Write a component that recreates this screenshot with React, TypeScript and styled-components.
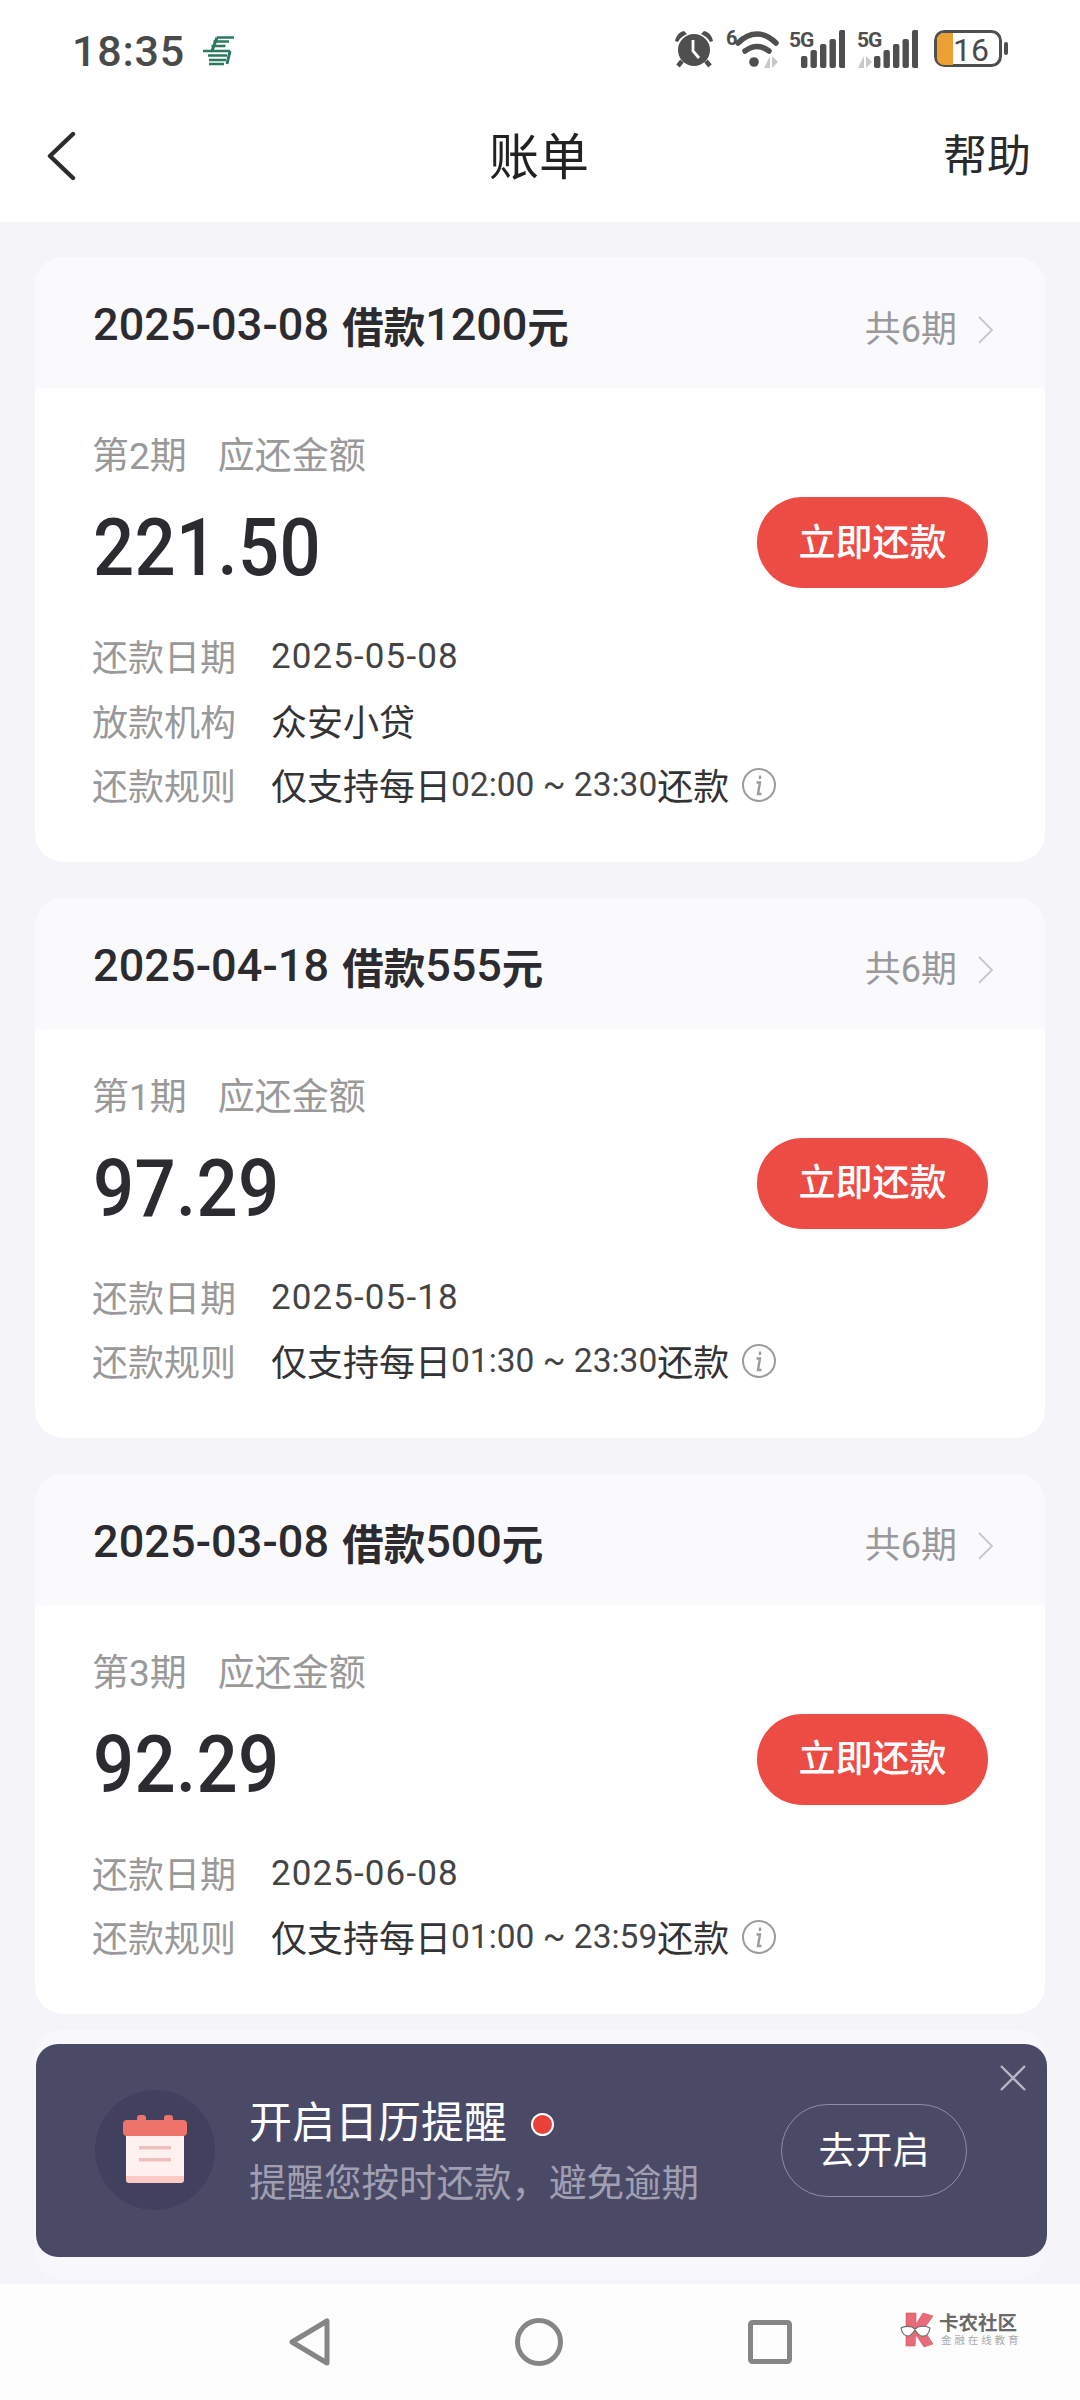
import React from "react";
import styled, { createGlobalStyle } from "styled-components";

const Global = createGlobalStyle`
  html, body { margin: 0; padding: 0; background: #fff; }
  body { font-family: Roboto, "Noto Sans CJK SC", sans-serif; }
  * { box-sizing: border-box; }
`;

const Page = styled.div`
  width: 1080px;
  height: 2400px;
  display: flex;
  flex-direction: column;
  overflow: hidden;
  background: #fff;
`;

const StatusBar = styled.div`
  height: 90px;
  flex: none;
  padding: 30px 72px 0;
  display: flex;
  justify-content: space-between;
  align-items: flex-start;
`;
const StatusLeft = styled.div`
  display: flex;
  align-items: center;
  gap: 18px;
`;
const Clock = styled.span`
  font: 500 43px/42px Roboto, sans-serif;
  color: #4a4a4a;
  letter-spacing: 0.8px;
`;
const StatusRight = styled.div`
  display: flex;
  align-items: flex-start;
`;
const StatusIcon = styled.svg<{ $ml?: number; $mt?: number }>`
  display: block;
  flex: none;
  margin-left: ${(p) => p.$ml ?? 0}px;
  margin-top: ${(p) => p.$mt ?? 0}px;
`;

const Header = styled.header`
  height: 132px;
  flex: none;
  padding: 0 48px 0 46px;
  display: grid;
  grid-template-columns: 1fr auto 1fr;
  align-items: center;
`;
const BackIcon = styled.svg`
  display: block;
`;
const Title = styled.h1`
  margin: -7px 0 0;
  font: 400 50px/60px "Noto Sans CJK SC", sans-serif;
  color: #222;
`;
const HelpLink = styled.span`
  justify-self: end;
  font: 400 44px/60px "Noto Sans CJK SC", sans-serif;
  color: #2a2a2a;
  margin: -6px 1px 0 0;
`;

const Main = styled.main`
  height: 2062px;
  flex: none;
  overflow: hidden;
  background: #f4f4f9;
  padding: 35px 35px 0;
  display: flex;
  flex-direction: column;
  gap: 36px;
`;

const Card = styled.section`
  background: #fff;
  border-radius: 28px;
  overflow: hidden;
`;
const CardHead = styled.div`
  height: 131px;
  background: #fafafd;
  padding: 0 51px 0 58px;
  display: flex;
  justify-content: space-between;
  align-items: center;
`;
const CardTitle = styled.div`
  display: flex;
  align-items: center;
  color: #2c2c30;
  margin-top: 5px;
`;
const TitleDate = styled.span`
  font: 500 45px/60px Roboto, sans-serif;
  margin-right: 13px;
  letter-spacing: 0.1px;
`;
const TitleWord = styled.span`
  font: 700 41.5px/60px "Noto Sans CJK SC", sans-serif;
`;
const TitleNum = styled.span`
  font: 500 45px/60px Roboto, sans-serif;
  letter-spacing: -0.1px;
`;
const Terms = styled.div`
  display: flex;
  align-items: center;
  gap: 21px;
  color: #999;
  font: 400 36px/50px Roboto, "Noto Sans CJK SC", sans-serif;
  margin-top: 14px;
`;
const Chevron = styled.svg`
  display: block;
`;

const CardBody = styled.div`
  padding: 45px 57px 44px 57px;
`;
const PeriodLine = styled.div`
  font: 400 37px/46px Roboto, "Noto Sans CJK SC", sans-serif;
  color: #999;
  display: flex;
  gap: 31px;
  margin-top: 1px;
  margin-bottom: -1px;
`;
const AmountRow = styled.div`
  height: 100px;
  margin-top: 19px;
  display: flex;
  justify-content: space-between;
  align-items: flex-start;
`;
const Amount = styled.div`
  font: 500 80px/100px Roboto, sans-serif;
  color: #2c2c30;
  letter-spacing: 0.4px;
  margin-left: 1px;
  transform: scaleX(0.905);
  transform-origin: left center;
`;
const PayButton = styled.button`
  width: 231px;
  height: 91px;
  margin-top: -1px;
  border: 0;
  border-radius: 46px;
  background: #ec4c44;
  color: #fff;
  font: 500 37px/50px "Noto Sans CJK SC", sans-serif;
  padding: 0 0 6px;
`;
const Rows = styled.div`
  margin-top: 25px;
  margin-bottom: 1px;
`;
const Row = styled.div`
  height: 64.5px;
  display: flex;
  align-items: center;
`;
const RowLabel = styled.span`
  width: 179px;
  flex: none;
  font: 400 36px/46px "Noto Sans CJK SC", sans-serif;
  color: #999;
`;
const RowValue = styled.span`
  font: 400 36px/46px "Noto Sans CJK SC", sans-serif;
  color: #333;
`;
const RowDigits = styled.span`
  font: 400 35px/46px Roboto, sans-serif;
  color: #444;
  letter-spacing: 1.1px;
  margin-top: 4px;
`;
const RuleTime = styled.span`
  font: 400 33.5px/46px Roboto, sans-serif;
  color: #444;
  margin-top: 2px;
`;
const InfoIcon = styled.svg`
  display: block;
  margin-left: 12px;
  margin-top: 1px;
`;

const Shelf = styled.div`
  height: 250px;
  flex: none;
  margin-top: -20px;
  padding-top: 14px;
  background: #f8f8fc;
  border-radius: 28px;
`;
const Banner = styled.div`
  position: relative;
  width: 1011px;
  height: 213px;
  margin-left: 1px;
  background: #4b4a66;
  border-radius: 22px;
  padding: 0 80px 0 59px;
  display: flex;
  align-items: center;
`;
const CalendarBadge = styled.div`
  width: 120px;
  height: 120px;
  flex: none;
  border-radius: 50%;
  background: #41405e;
  display: flex;
  align-items: center;
  justify-content: center;
`;
const BannerText = styled.div`
  margin-left: 34px;
  flex: 1;
  display: flex;
  flex-direction: column;
`;
const BannerTitle = styled.div`
  font: 400 43px/60px "Noto Sans CJK SC", sans-serif;
  color: #fff;
  display: flex;
  align-items: center;
  gap: 24px;
  margin-top: -6px;
`;
const RedDot = styled.span`
  width: 23px;
  height: 23px;
  border-radius: 50%;
  background: #e9413a;
  border: 2px solid #fff;
  margin-top: 10px;
`;
const BannerSub = styled.div`
  font: 400 37.5px/50px "Noto Sans CJK SC", sans-serif;
  color: #a09fb2;
  margin-top: 6px;
`;
const OpenButton = styled.button`
  width: 186px;
  height: 93px;
  flex: none;
  background: transparent;
  border: 1px solid #8f8ea5;
  border-radius: 47px;
  color: #fff;
  font: 400 37px/50px "Noto Sans CJK SC", sans-serif;
  padding: 0 0 5px;
`;
const CloseIcon = styled.svg`
  position: absolute;
  top: 21px;
  right: 21px;
  display: block;
`;

const Nav = styled.nav`
  position: relative;
  height: 116px;
  flex: none;
  background: #fdfdfd;
  display: flex;
  justify-content: center;
  align-items: center;
  gap: 185px;
`;
const NavIcon = styled.svg`
  display: block;
`;
const Watermark = styled.div`
  position: absolute;
  left: 900px;
  top: 28px;
  display: flex;
  align-items: flex-start;
  gap: 3px;
`;
const WatermarkText = styled.div`
  display: flex;
  flex-direction: column;
`;
const WatermarkName = styled.span`
  font: 700 19.5px/20px "Noto Sans CJK SC", sans-serif;
  color: #6a6a6a;
  white-space: nowrap;
`;
const WatermarkSub = styled.span`
  font: 400 10.5px/14px "Noto Sans CJK SC", sans-serif;
  color: #ababab;
  letter-spacing: 2.9px;
  white-space: nowrap;
  margin-top: 1px;
  margin-left: 2px;
`;

type Bill = {
  date: string;
  principal: string;
  period: string;
  amount: string;
  due: string;
  lender?: string;
  window: string;
};

const bills: Bill[] = [
  { date: "2025-03-08", principal: "1200", period: "第2期", amount: "221.50", due: "2025-05-08", lender: "众安小贷", window: "02:00 ~ 23:30" },
  { date: "2025-04-18", principal: "555", period: "第1期", amount: "97.29", due: "2025-05-18", window: "01:30 ~ 23:30" },
  { date: "2025-03-08", principal: "500", period: "第3期", amount: "92.29", due: "2025-06-08", window: "01:00 ~ 23:59" },
];

const Bars = ({ x }: { x: number }) => (
  <g fill="#4f4f4f">
    <rect x={x} y="26" width="6.4" height="12" rx="2" />
    <rect x={x + 9.5} y="20" width="6.4" height="18" rx="2" />
    <rect x={x + 19} y="14" width="6.4" height="24" rx="2" />
    <rect x={x + 28.5} y="9" width="6.4" height="29" rx="2" />
    <rect x={x + 38} y="0" width="6.4" height="38" rx="2" />
  </g>
);

const Arrows = ({ x, y }: { x: number; y: number }) => (
  <g fill="#c9c9c9" transform={`translate(${x} ${y})`}>
    <path d="M6 0v12H0z" />
    <path d="M8 0l6 6-6 0z" />
    <path d="M8 6h6l-6 6z" />
  </g>
);

const PostLogo = () => (
  <svg width="31" height="30" viewBox="0 0 31 30" fill="none" stroke="#2b7a5c" strokeWidth="2.4">
    <path d="M14 1.5h17M10.5 5.5h15.5M8.5 10h14" />
    <path d="M0 15h27M5 19.5h19M6 24h17M6 28h15" />
    <path d="M14 1.5L9 15M27 15l-3 13" strokeWidth="3" />
  </svg>
);

const Alarm = () => (
  <StatusIcon width="38" height="38" viewBox="0 0 38 38">
    <circle cx="19" cy="20" r="16" fill="#4f4f4f" />
    <path d="M0 11C1 6 4 2 9 1l3 3c-4 2-7 4-9 8zM38 11c-1-5-4-9-9-10l-3 3c4 2 7 4 9 8z" fill="#4f4f4f" />
    <path d="M7 31l-4 5M31 31l4 5" stroke="#4f4f4f" strokeWidth="4.5" />
    <path d="M18 10v11l6 7" stroke="#fff" strokeWidth="2.8" fill="none" />
  </StatusIcon>
);

const Wifi = () => (
  <StatusIcon $ml={13} $mt={-6} width="54" height="46" viewBox="0 -6 54 46">
    <text x="0" y="15" fontFamily="Roboto, sans-serif" fontWeight="700" fontSize="20" fill="#4f4f4f">6</text>
    <path d="M12 13C24 1 38 1 50 13" fill="none" stroke="#4f4f4f" strokeWidth="5.5" strokeLinecap="round" />
    <path d="M19 21c8-6 16-6 24 0" fill="none" stroke="#4f4f4f" strokeWidth="5.5" strokeLinecap="round" />
    <circle cx="28" cy="32" r="4.8" fill="#4f4f4f" />
    <Arrows x={38} y={26} />
  </StatusIcon>
);

const FiveG = ({ second }: { second?: boolean }) => (
  <StatusIcon $ml={second ? 12 : 9} $mt={-6} width={second ? 61 : 56} height="46" viewBox={second ? "0 -6 61 46" : "0 -6 56 46"}>
    <text x="0" y="17" fontFamily="Roboto, sans-serif" fontWeight="700" fontSize="21" letterSpacing="-1" fill="#4f4f4f">5G</text>
    {second ? <Arrows x={1} y={26} /> : null}
    <Bars x={second ? 17 : 12} />
  </StatusIcon>
);

const Battery = () => (
  <StatusIcon $ml={16} width="74" height="38" viewBox="0 0 74 38">
    <rect x="1.5" y="1.5" width="65" height="34" rx="9" fill="none" stroke="#4f4f4f" strokeWidth="3" />
    <path d="M3 10a7 7 0 0 1 7-7h9v32h-9a7 7 0 0 1-7-7z" fill="#ec9f32" />
    <text x="19" y="31" fontFamily="Roboto, sans-serif" fontWeight="400" fontSize="32" fill="#4a4a4a">16</text>
    <rect x="70" y="12" width="4" height="13" rx="2" fill="#4f4f4f" />
  </StatusIcon>
);

const BillCard = ({ bill }: { bill: Bill }) => (
  <Card>
    <CardHead>
      <CardTitle>
        <TitleDate>{bill.date}</TitleDate>
        <TitleWord>借款</TitleWord>
        <TitleNum>{bill.principal}</TitleNum>
        <TitleWord>元</TitleWord>
      </CardTitle>
      <Terms>
        <span>共6期</span>
        <Chevron width="16" height="28" viewBox="0 0 16 28" fill="none" stroke="#c9c9c9" strokeWidth="2">
          <path d="M1 1l13 13L1 27" />
        </Chevron>
      </Terms>
    </CardHead>
    <CardBody>
      <PeriodLine>
        <span>{bill.period}</span>
        <span>应还金额</span>
      </PeriodLine>
      <AmountRow>
        <Amount>{bill.amount}</Amount>
        <PayButton>立即还款</PayButton>
      </AmountRow>
      <Rows>
        <Row>
          <RowLabel>还款日期</RowLabel>
          <RowDigits>{bill.due}</RowDigits>
        </Row>
        {bill.lender ? (
          <Row>
            <RowLabel>放款机构</RowLabel>
            <RowValue>{bill.lender}</RowValue>
          </Row>
        ) : null}
        <Row>
          <RowLabel>还款规则</RowLabel>
          <RowValue>仅支持每日</RowValue>
          <RuleTime>{bill.window}</RuleTime>
          <RowValue>还款</RowValue>
          <InfoIcon width="36" height="36" viewBox="0 0 36 36" fill="none" stroke="#9c9c9c">
            <circle cx="18" cy="18" r="16" strokeWidth="2" />
            <path d="M19 8.5v3.5M15.5 15.5h3.5l-2 11.5h3.5" strokeWidth="2.4" />
          </InfoIcon>
        </Row>
      </Rows>
    </CardBody>
  </Card>
);

const CalendarArt = () => (
  <svg width="66" height="70" viewBox="0 0 66 70">
    <rect x="15" y="0" width="9" height="10" rx="3" fill="#ec7469" />
    <rect x="42" y="0" width="9" height="10" rx="3" fill="#ec7469" />
    <rect x="4" y="16" width="58" height="52" rx="3" fill="#fdc9c5" />
    <rect x="4" y="16" width="58" height="45" fill="#fff1ef" />
    <rect x="1" y="5" width="64" height="16" rx="4" fill="#ec7469" />
    <rect x="17" y="31" width="32" height="3.5" fill="#eec1c0" />
    <rect x="17" y="43" width="32" height="3.5" fill="#eec1c0" />
  </svg>
);

const WatermarkLogo = () => (
  <svg width="36" height="36" viewBox="0 0 36 36">
    <path d="M6 1h10v11l7-11 10 3-7 10-2 4 9 14-9 3-8-12-1 11H6z" fill="#e96a78" stroke="#c95a66" strokeWidth="0.6" />
    <path d="M1 16c3-2 7-2 11-1l3 2 3-2c4-1 9-1 12 1-1 6-4 9-8 8-3 0-5-3-7-6-2 3-4 6-7 6-4 0-6-3-7-8z" fill="#fff" stroke="#6d6d6d" strokeWidth="1.2" />
  </svg>
);

export default function App() {
  return (
    <Page>
      <Global />
      <StatusBar>
        <StatusLeft>
          <Clock>18:35</Clock>
          <PostLogo />
        </StatusLeft>
        <StatusRight>
          <Alarm />
          <Wifi />
          <FiveG />
          <FiveG second />
          <Battery />
        </StatusRight>
      </StatusBar>
      <Header>
        <BackIcon width="32" height="50" viewBox="0 0 32 50" fill="none" stroke="#2c2c2c" strokeWidth="4.4" strokeLinecap="round" strokeLinejoin="round">
          <path d="M27 3L4 25l23 22" />
        </BackIcon>
        <Title>账单</Title>
        <HelpLink>帮助</HelpLink>
      </Header>
      <Main>
        {bills.map((bill) => (
          <BillCard key={bill.amount} bill={bill} />
        ))}
        <Shelf>
          <Banner>
            <CalendarBadge>
              <CalendarArt />
            </CalendarBadge>
            <BannerText>
              <BannerTitle>
                开启日历提醒
                <RedDot />
              </BannerTitle>
              <BannerSub>提醒您按时还款，避免逾期</BannerSub>
            </BannerText>
            <OpenButton>去开启</OpenButton>
            <CloseIcon width="26" height="26" viewBox="0 0 26 26" stroke="#b7b6c6" strokeWidth="2.4" fill="none">
              <path d="M1 1l24 24M25 1L1 25" />
            </CloseIcon>
          </Banner>
        </Shelf>
      </Main>
      <Nav>
        <NavIcon width="41" height="48" viewBox="0 0 41 48" fill="none" stroke="#868686" strokeWidth="5" strokeLinejoin="round">
          <path d="M38 3v42L3 24z" />
        </NavIcon>
        <NavIcon width="48" height="48" viewBox="0 0 48 48" fill="none" stroke="#868686" strokeWidth="5">
          <circle cx="24" cy="24" r="21.5" />
        </NavIcon>
        <NavIcon width="44" height="44" viewBox="0 0 44 44" fill="none" stroke="#868686" strokeWidth="5" strokeLinejoin="round">
          <rect x="2.5" y="2.5" width="39" height="39" rx="2" />
        </NavIcon>
        <Watermark>
          <WatermarkLogo />
          <WatermarkText>
            <WatermarkName>卡农社区</WatermarkName>
            <WatermarkSub>金融在线教育</WatermarkSub>
          </WatermarkText>
        </Watermark>
      </Nav>
    </Page>
  );
}
